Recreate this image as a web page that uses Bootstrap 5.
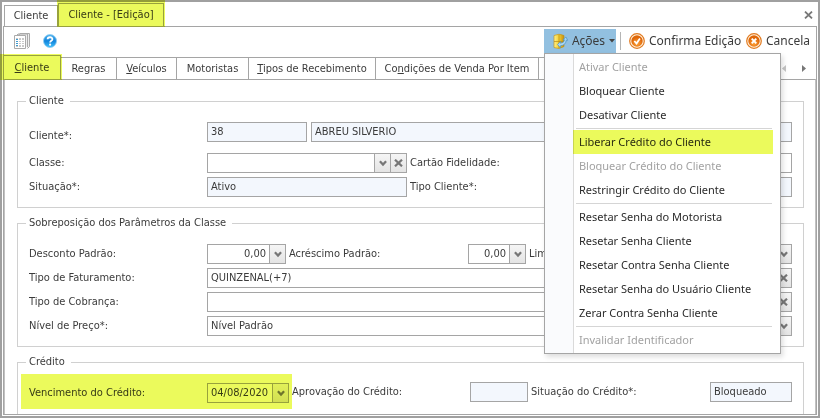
<!DOCTYPE html>
<html lang="pt-BR">
<head>
<meta charset="utf-8">
<meta name="viewport" content="width=device-width, initial-scale=1">
<title>Cliente - [Edição]</title>
<link rel="stylesheet" href="https://cdn.jsdelivr.net/npm/bootstrap@5.3.0/dist/css/bootstrap.min.css">
<style>
:root { --edge: #a5a5a5; --soft: #d0d0d0; --ink: #3b3b3b; --marker: #ebfa5c; }
body { font-family: "DejaVu Sans Condensed", "Noto Sans", sans-serif; font-size: 11px; line-height: 16px; color: var(--ink); background: #fff; }
button { font: inherit; color: inherit; padding: 0; border: 0; background: none; }
.window { border: 2px solid #a0a0a0; padding: 1px; }
.doc-tabs { height: 23px; padding-left: 1px; position: relative; }
.doc-tab { border: 1px solid var(--edge); border-bottom: 0; height: 21px; width: 54px; padding: 0; line-height: 20px; background: #fff; }
.doc-tab.current { height: 23px; width: 106px; line-height: 22px; }
.marked { position: relative; }
.marked::after { content: ""; position: absolute; inset: var(--spread, -1px); background: var(--marker); mix-blend-mode: multiply; pointer-events: none; z-index: 2; }
.doc-tab.marked { --spread: -4px -2px -1px -2px; }
.close-doc { width: 18px; height: 22px; }
.client-area { border: 1px solid var(--edge); min-height: 0; }
.tools { height: 28px; padding: 2px 6px 2px 6px; font-family: "Noto Sans", sans-serif; font-size: 12px; }
.tools button { height: 24px; gap: 4px; }
.tool-icon { width: 24px; justify-content: center; }
.actions { background: #92c0e0; width: 72px; padding-left: 8px; }
.rule-v { width: 1px; height: 18px; background: #b5b5b5; margin: 0 8px 0 4px; }
.confirm { width: 117px; }
.actions-menu { --bs-dropdown-font-size: 11px; --bs-dropdown-min-width: 237px; --bs-dropdown-padding-y: 1px; --bs-dropdown-border-radius: 0; --bs-dropdown-border-color: #a5a5a5; top: 24px; left: 0; box-shadow: 2px 3px 5px #0002; background: linear-gradient(90deg, #fafbfd 28px, #dadada 28px, #dadada 29px, #fff 29px); }
.actions-menu .dropdown-item { height: 24px; line-height: 24px; padding: 0 0 0 6px; margin: 0 7px 0 28px; width: auto; color: #2b2b2b; min-width: 200px; }
.actions-menu .dropdown-item.disabled { color: #a2a2a2; }
.actions-menu .marked { --spread: 0; }
.actions-menu .dropdown-divider { margin: 1px 8px 1px 31px; border-top: 1px solid #d5d5d5; opacity: 1; }
.page-tabs { height: 24px; }
.page-tab { border: 1px solid var(--edge); border-bottom: 0; height: 22px; line-height: 20px; flex: none; margin-left: -1px; background: #fff; text-align: center; }
.page-tab.current { height: 24px; margin-left: -1px; line-height: 22px; }
.page-tab.marked { --spread: -2px -2px -1px -4px; }
.tw-a { width: 58px; } .tw-b { width: 57px; } .tw-c { width: 61px; } .tw-d { width: 73px; }
.tw-e { width: 128px; } .tw-f { width: 164px; }
.pager { width: 44px; height: 22px; gap: 12px; }
.sheet { border: 1px solid #c2c2c2; border-top-color: var(--edge); border-bottom: 0; padding: 21px 11px 0 12px; overflow: hidden; min-height: 0; }
.group { border: 1px solid var(--soft); padding: 20px 11px 10px; margin-bottom: 15px; position: relative; min-width: 0; display: flex; flex-direction: column; gap: 4px; }
.group h2 { position: absolute; top: -9px; left: 8px; margin: 0; padding: 0 6px 0 3px; background: #fff; font-size: 11px; line-height: 16px; font-weight: 400; }
.group.last { border-bottom: 0; flex: 1 0 auto; margin: 0; padding-top: 11px; }
.line { display: flex; align-items: center; height: 20px; }
.line.roomy { margin-bottom: 7px; }
.line.roomy > label { padding-top: 8px; }
.line label { flex: none; width: 178px; white-space: nowrap; }
.line label.follow { padding-left: 3px; width: 182px; }
.field { display: flex; height: 20px; border: 1px solid var(--edge); background: #fff; min-width: 0; flex: none; }
.field.locked, .field.locked input { background: #f3f7fd; }
.field input, .field select { flex: 1 1 0; width: 0; min-width: 0; border: 0; padding: 0 3px; color: inherit; font: inherit; background: transparent; appearance: none; outline: 0; }
.field button { flex: none; width: 16px; border-left: 1px solid var(--edge); background: linear-gradient(#f5f5f5, #e4e4e4); display: flex; align-items: center; justify-content: center; }
.w-code { width: 100px; margin-right: 4px; }
.w-wide { width: 200px; } .w-num { width: 79px; } .w-small { width: 58px; } .w-date { width: 82px; }
.grow { flex: 1 1 0; }
.due { --spread: 0; margin-left: -8px; padding: 9px 3px 6px 8px; height: 35px; }
</style>
<script src="https://cdn.jsdelivr.net/npm/bootstrap@5.3.0/dist/js/bootstrap.bundle.min.js"></script>
</head>
<body>
<svg class="position-absolute" width="0" height="0" aria-hidden="true">
  <symbol id="chev" viewBox="0 0 8 7"><path d="M.9 1.2 4 4.6 7.1 1.2" fill="none" stroke="#777" stroke-width="2.2"/></symbol>
  <symbol id="cross" viewBox="0 0 9 8"><path d="M1 .7 8 7.3M8 .7 1 7.3" fill="none" stroke="#777" stroke-width="2.2"/></symbol>
  <radialGradient id="orange" cy=".7"><stop offset="0" stop-color="#ffa53c"/><stop offset="1" stop-color="#df6608"/></radialGradient>
  <linearGradient id="blue" x2="0" y2="1"><stop offset="0" stop-color="#4fb4ef"/><stop offset=".5" stop-color="#1284dc"/><stop offset="1" stop-color="#3fc0fa"/></linearGradient>
  <linearGradient id="gold"><stop offset="0" stop-color="#fff08a"/><stop offset=".5" stop-color="#f3cf30"/><stop offset="1" stop-color="#c48d10"/></linearGradient>
</svg>
<div class="window vh-100 d-flex flex-column">
  <nav class="doc-tabs d-flex align-items-end flex-shrink-0" aria-label="Documentos">
    <button class="doc-tab" type="button">Cliente</button>
    <button class="doc-tab current marked" type="button">Cliente - [Edição]</button>
    <button class="close-doc ms-auto" type="button" aria-label="Fechar"><svg width="9" height="8" viewBox="0 0 9 8"><path d="M1 .6 8 7.4M8 .6 1 7.4" stroke="#777" stroke-width="1.8"/></svg></button>
  </nav>
  <main class="client-area flex-fill d-flex flex-column">
    <div class="tools d-flex align-items-center flex-shrink-0">
      <button type="button" class="tool-icon d-flex align-items-center" aria-label="Lista"><svg width="16" height="16" viewBox="0 0 16 16"><path d="M4.5 2.5 6 .5h9.500v13l-2 2M2.500 2.500l1.500-1.500h9.500v13" fill="#eee" stroke="#aaa"/><path d="M.5 2.500h11v13H.5z" fill="#fff" stroke="#aaa"/><path d="M2 5h8v9H2z" fill="#c9c9c9"/><path d="M2 7.500h8M2 9.500h8M2 11.500h8M4.500 5v9M7.500 5v9" stroke="#fff"/><path d="M2 6h2v1H2zm0 2h2v1H2zm0 2h2v1H2zm0 2h2v1H2z" fill="#3f9bd0"/></svg></button>
      <button type="button" class="tool-icon d-flex align-items-center ms-1" aria-label="Ajuda"><svg width="14" height="14" viewBox="0 0 14 14"><circle cx="7" cy="7" r="6.500" fill="url(#blue)" stroke="#8bc9ef" stroke-width=".8"/><path d="M4.600 5.300C4.600 2.600 9.500 2.600 9.400 5.200 9.300 6.800 7.100 6.700 7.100 8.500" fill="none" stroke="#fff" stroke-width="1.800"/><circle cx="7.100" cy="10.700" r="1.100" fill="#fff"/></svg></button>
      <div class="dropdown ms-auto">
        <button type="button" class="actions d-flex align-items-center" aria-expanded="true"><svg width="16" height="16" viewBox="0 0 16 16"><path d="M2 2.500Q7 0 12 2.500v11Q7 17 2 14.500z" fill="url(#gold)" stroke="#bf941c" stroke-width=".7"/><path d="M2 8.500h10M7 2v13" stroke="#b88b13" stroke-width=".7"/><path d="m5.500 11.500 3-3v1.700q3.500-.2 4-3.400h-1.600l3-2.800 1.800 3.300h-1.400q-.7 5-5.800 5.500v2z" fill="#a9d6f4" stroke="#4a91c1" stroke-width=".7"/></svg>Ações<svg width="6" height="4" viewBox="0 0 6 4"><path d="M0 0h6L3 3.500z" fill="#444"/></svg></button>
        <div class="dropdown-menu actions-menu show">
          <a class="dropdown-item disabled" href="#" aria-disabled="true">Ativar Cliente</a>
          <a class="dropdown-item" href="#">Bloquear Cliente</a>
          <a class="dropdown-item" href="#">Desativar Cliente</a>
          <hr class="dropdown-divider">
          <a class="dropdown-item marked" href="#">Liberar Crédito do Cliente</a>
          <a class="dropdown-item disabled" href="#" aria-disabled="true">Bloquear Crédito do Cliente</a>
          <a class="dropdown-item" href="#">Restringir Crédito do Cliente</a>
          <hr class="dropdown-divider">
          <a class="dropdown-item" href="#">Resetar Senha do Motorista</a>
          <a class="dropdown-item" href="#">Resetar Senha Cliente</a>
          <a class="dropdown-item" href="#">Resetar Contra Senha Cliente</a>
          <a class="dropdown-item" href="#">Resetar Senha do Usuário Cliente</a>
          <a class="dropdown-item" href="#">Zerar Contra Senha Cliente</a>
          <hr class="dropdown-divider">
          <a class="dropdown-item disabled" href="#" aria-disabled="true">Invalidar Identificador</a>
        </div>
      </div>
      <span class="rule-v"></span>
      <button type="button" class="confirm d-flex align-items-center text-nowrap"><svg width="16" height="16" viewBox="0 0 16 16"><circle cx="8" cy="8" r="7.300" fill="#fff3df" stroke="#e27a20" stroke-width="1.200"/><circle cx="8" cy="8" r="5.700" fill="url(#orange)"/><path d="m5.300 8 2.200 2.500 3.400-5" fill="none" stroke="#fff" stroke-width="1.800"/></svg>Confirma Edição</button>
      <button type="button" class="d-flex align-items-center"><svg width="16" height="16" viewBox="0 0 16 16"><circle cx="8" cy="8" r="7.300" fill="#fff3df" stroke="#e27a20" stroke-width="1.200"/><circle cx="8" cy="8" r="5.700" fill="url(#orange)"/><path d="m5.700 5.700 4.600 4.600m0-4.600-4.600 4.600" fill="none" stroke="#fff" stroke-width="1.900"/></svg>Cancela</button>
    </div>
    <nav class="page-tabs d-flex align-items-end flex-shrink-0" aria-label="Seções">
      <button type="button" class="page-tab current marked tw-a"><u>C</u>liente</button>
      <button type="button" class="page-tab tw-b">Regras</button>
      <button type="button" class="page-tab tw-c"><u>V</u>eículos</button>
      <button type="button" class="page-tab tw-d">Motoristas</button>
      <button type="button" class="page-tab tw-e"><u>T</u>ipos de Recebimento</button>
      <button type="button" class="page-tab tw-f">Co<u>n</u>dições de Venda Por Item</button>
      <div class="page-tab flex-fill"></div>
      <div class="pager d-flex align-items-center justify-content-center">
        <button type="button" class="d-flex" aria-label="Anterior"><svg width="8" height="7" viewBox="0 0 8 7"><path d="M6 0v7L2 3.500z" fill="#c4c4c4"/></svg></button>
        <button type="button" class="d-flex" aria-label="Próximo"><svg width="8" height="7" viewBox="0 0 8 7"><path d="M2 0v7l4-3.500z" fill="#777"/></svg></button>
      </div>
    </nav>
    <form class="sheet flex-fill d-flex flex-column">
      <section class="group">
        <h2>Cliente</h2>
        <div class="line roomy">
          <label for="code">Cliente*:</label>
          <div class="field locked w-code"><input id="code" value="38" readonly></div>
          <div class="field locked grow"><input value="ABREU SILVERIO" aria-label="Nome do cliente" readonly></div>
        </div>
        <div class="line">
          <label for="class">Classe:</label>
          <div class="field w-wide"><select id="class"><option></option></select><button type="button" aria-label="Abrir"><svg width="8" height="7"><use href="#chev"/></svg></button><button type="button" aria-label="Limpar"><svg width="9" height="8"><use href="#cross"/></svg></button></div>
          <label class="follow" for="card-no">Cartão Fidelidade:</label>
          <div class="field grow"><input id="card-no"></div>
        </div>
        <div class="line">
          <label for="status">Situação*:</label>
          <div class="field locked w-wide"><input id="status" value="Ativo" readonly></div>
          <label class="follow" for="kind">Tipo Cliente*:</label>
          <div class="field locked grow"><input id="kind" readonly></div>
        </div>
      </section>
      <section class="group">
        <h2>Sobreposição dos Parâmetros da Classe</h2>
        <div class="line">
          <label for="disc">Desconto Padrão:</label>
          <div class="field w-num"><input class="text-end" id="disc" value="0,00"><button type="button" aria-label="Abrir"><svg width="8" height="7"><use href="#chev"/></svg></button></div>
          <label class="follow" for="incr">Acréscimo Padrão:</label>
          <div class="field w-small"><input class="text-end" id="incr" value="0,00"><button type="button" aria-label="Abrir"><svg width="8" height="7"><use href="#chev"/></svg></button></div>
          <label class="follow" for="limit">Limite:</label>
          <div class="field grow"><input id="limit"><button type="button" aria-label="Abrir"><svg width="8" height="7"><use href="#chev"/></svg></button></div>
        </div>
        <div class="line">
          <label for="billing">Tipo de Faturamento:</label>
          <div class="field grow"><select id="billing"><option>QUINZENAL(+7)</option></select><button type="button" aria-label="Abrir"><svg width="8" height="7"><use href="#chev"/></svg></button><button type="button" aria-label="Limpar"><svg width="9" height="8"><use href="#cross"/></svg></button></div>
        </div>
        <div class="line">
          <label for="charge">Tipo de Cobrança:</label>
          <div class="field grow"><select id="charge"><option></option></select><button type="button" aria-label="Abrir"><svg width="8" height="7"><use href="#chev"/></svg></button><button type="button" aria-label="Limpar"><svg width="9" height="8"><use href="#cross"/></svg></button></div>
        </div>
        <div class="line">
          <label for="level">Nível de Preço*:</label>
          <div class="field grow"><select id="level"><option>Nível Padrão</option></select><button type="button" aria-label="Abrir"><svg width="8" height="7"><use href="#chev"/></svg></button></div>
        </div>
      </section>
      <section class="group last">
        <h2>Crédito</h2>
        <div class="d-flex align-items-center">
          <div class="line due marked">
            <label for="due">Vencimento do Crédito:</label>
            <div class="field w-date"><input id="due" value="04/08/2020"><button type="button" aria-label="Abrir"><svg width="8" height="7"><use href="#chev"/></svg></button></div>
          </div>
          <div class="line flex-fill">
            <label for="approval">Aprovação do Crédito:</label>
            <div class="field locked w-small"><input id="approval" readonly></div>
            <label class="follow" for="credit">Situação do Crédito*:</label>
            <div class="field locked grow"><input id="credit" value="Bloqueado" readonly></div>
          </div>
        </div>
      </section>
    </form>
  </main>
</div>
</body>
</html>
